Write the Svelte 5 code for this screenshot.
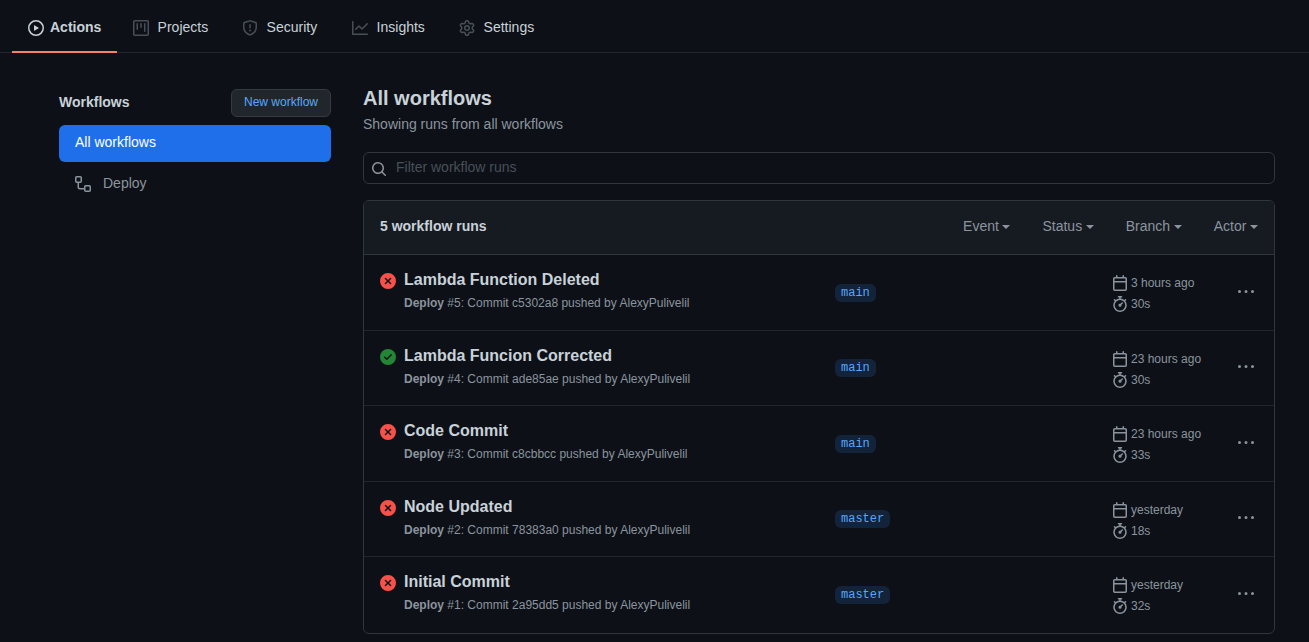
<script>
  const tabs = [
    { id: 'play', label: 'Actions', width: 105, active: true },
    { id: 'project', label: 'Projects', width: 109 },
    { id: 'shield', label: 'Security', width: 110 },
    { id: 'graph', label: 'Insights', width: 107 },
    { id: 'gear', label: 'Settings', width: 108 }
  ];
  const filters = ['Event', 'Status', 'Branch', 'Actor'];
  const runs = [
    { title: 'Lambda Function Deleted', n: 5, sha: 'c5302a8', branch: 'main', when: '3 hours ago', took: '30s' },
    { title: 'Lambda Funcion Corrected', n: 4, sha: 'ade85ae', branch: 'main', when: '23 hours ago', took: '30s', ok: true },
    { title: 'Code Commit', n: 3, sha: 'c8cbbcc', branch: 'main', when: '23 hours ago', took: '33s' },
    { title: 'Node Updated', n: 2, sha: '78383a0', branch: 'master', when: 'yesterday', took: '18s' },
    { title: 'Initial Commit', n: 1, sha: '2a95dd5', branch: 'master', when: 'yesterday', took: '32s' }
  ];
  const paths = {
    play: 'M1.5 8a6.5 6.5 0 1113 0 6.5 6.5 0 01-13 0zM8 0a8 8 0 100 16A8 8 0 008 0zM6.379 5.227A.25.25 0 006 5.442v5.117a.25.25 0 00.379.214l4.264-2.559a.25.25 0 000-.428L6.379 5.227z',
    project: 'M1.75 0A1.75 1.75 0 000 1.75v12.5C0 15.216.784 16 1.75 16h12.5A1.75 1.75 0 0016 14.25V1.75A1.75 1.75 0 0014.25 0H1.75zM1.5 1.75a.25.25 0 01.25-.25h12.5a.25.25 0 01.25.25v12.5a.25.25 0 01-.25.25H1.75a.25.25 0 01-.25-.25V1.75zM11.75 3a.75.75 0 00-.75.75v7.5a.75.75 0 001.5 0v-7.5a.75.75 0 00-.75-.75zm-8.25.75a.75.75 0 011.5 0v5.5a.75.75 0 01-1.5 0v-5.5zM8 3a.75.75 0 00-.75.75v3.5a.75.75 0 001.5 0v-3.5A.75.75 0 008 3z',
    shield: 'M7.467.133a1.75 1.75 0 011.066 0l5.25 1.68A1.75 1.75 0 0115 3.48V7c0 1.566-.32 3.182-1.303 4.682-.983 1.498-2.585 2.813-5.032 3.855a1.7 1.7 0 01-1.33 0c-2.447-1.042-4.049-2.357-5.032-3.855C1.32 10.182 1 8.566 1 7V3.48a1.75 1.75 0 011.217-1.667l5.25-1.68zm.61 1.429a.25.25 0 00-.153 0l-5.25 1.68a.25.25 0 00-.174.238V7c0 1.358.275 2.666 1.057 3.86.784 1.194 2.121 2.34 4.366 3.297a.2.2 0 00.154 0c2.245-.956 3.582-2.104 4.366-3.298C13.225 9.666 13.5 8.36 13.5 7V3.48a.25.25 0 00-.174-.237l-5.25-1.68zM9 10.5a1 1 0 11-2 0 1 1 0 012 0zm-.25-5.75a.75.75 0 10-1.5 0v3a.75.75 0 001.5 0v-3z',
    graph: 'M1.5 1.75a.75.75 0 00-1.5 0v12.5c0 .414.336.75.75.75h14.5a.75.75 0 000-1.5H1.5V1.75zm14.28 2.53a.75.75 0 00-1.06-1.06L10 7.94 7.53 5.47a.75.75 0 00-1.06 0L3.22 8.72a.75.75 0 001.06 1.06L7 7.06l2.47 2.47a.75.75 0 001.06 0l5.25-5.25z',
    gear: 'M7.429 1.525a6.593 6.593 0 011.142 0c.036.003.108.036.137.146l.289 1.105c.147.56.55.967.997 1.189.174.086.341.183.501.29.417.278.97.423 1.53.27l1.102-.303c.11-.03.175.016.195.046.219.31.41.641.573.989.014.031.022.11-.059.19l-.815.806c-.411.406-.562.957-.53 1.456a4.588 4.588 0 010 .582c-.032.499.119 1.05.53 1.456l.815.806c.08.08.073.159.059.19a6.494 6.494 0 01-.573.99c-.02.029-.086.074-.195.045l-1.103-.303c-.559-.153-1.112-.008-1.529.27-.16.107-.327.204-.5.29-.449.222-.851.628-.998 1.189l-.289 1.105c-.029.11-.101.143-.137.146a6.613 6.613 0 01-1.142 0c-.036-.003-.108-.037-.137-.146l-.289-1.105c-.147-.56-.55-.967-.997-1.189a4.502 4.502 0 01-.501-.29c-.417-.278-.97-.423-1.53-.27l-1.102.303c-.11.03-.175-.016-.195-.046a6.492 6.492 0 01-.573-.989c-.014-.031-.022-.11.059-.19l.815-.806c.411-.406.562-.957.53-1.456a4.587 4.587 0 010-.582c.032-.499-.119-1.05-.53-1.456l-.815-.806c-.08-.08-.073-.159-.059-.19a6.44 6.44 0 01.573-.99c.02-.029.086-.075.195-.045l1.103.303c.559.153 1.112.008 1.529-.27.16-.107.327-.204.5-.29.449-.222.851-.628.998-1.189l.289-1.105c.029-.11.101-.143.137-.146zM8 0c-.236 0-.47.01-.701.03-.743.065-1.29.615-1.458 1.261l-.29 1.106c-.017.066-.078.158-.211.224a5.994 5.994 0 00-.668.386c-.123.082-.233.09-.3.071L3.27 2.776c-.644-.177-1.392.02-1.82.63a7.977 7.977 0 00-.704 1.217c-.315.675-.111 1.422.363 1.891l.815.806c.05.048.098.147.088.294a6.084 6.084 0 000 .772c.01.147-.038.246-.088.294l-.815.806c-.474.469-.678 1.216-.363 1.891.2.428.436.835.704 1.218.428.609 1.176.806 1.82.63l1.103-.303c.066-.019.176-.011.299.071.213.143.436.272.668.386.133.066.194.158.212.224l.289 1.106c.169.646.715 1.196 1.458 1.26a8.094 8.094 0 001.402 0c.743-.064 1.29-.614 1.458-1.26l.29-1.106c.017-.066.078-.158.211-.224a5.98 5.98 0 00.668-.386c.123-.082.233-.09.3-.071l1.102.302c.644.177 1.392-.02 1.82-.63.268-.382.505-.789.704-1.217.315-.675.111-1.422-.364-1.891l-.814-.806c-.05-.048-.098-.147-.088-.294a6.1 6.1 0 000-.772c-.01-.147.039-.246.088-.294l.814-.806c.475-.469.679-1.216.364-1.891a7.992 7.992 0 00-.704-1.218c-.428-.609-1.176-.806-1.82-.63l-1.103.303c-.066.019-.176.011-.299-.071a5.991 5.991 0 00-.668-.386c-.133-.066-.194-.158-.212-.224L10.16 1.29C9.99.645 9.444.095 8.701.031A8.094 8.094 0 008 0zm1.5 8a1.5 1.5 0 11-3 0 1.5 1.5 0 013 0zM11 8a3 3 0 11-6 0 3 3 0 016 0z',
    workflow: 'M0 1.75C0 .784.784 0 1.75 0h3.5C6.216 0 7 .784 7 1.75v3.5A1.75 1.75 0 015.25 7H4v4a1 1 0 001 1h4v-1.25C9 9.784 9.784 9 10.75 9h3.5c.966 0 1.75.784 1.75 1.75v3.5A1.75 1.75 0 0114.25 16h-3.5A1.75 1.75 0 019 14.25v-.75H5A2.5 2.5 0 012.5 11V7h-.75A1.75 1.75 0 010 5.25v-3.5zm1.75-.25a.25.25 0 00-.25.25v3.5c0 .138.112.25.25.25h3.5a.25.25 0 00.25-.25v-3.5a.25.25 0 00-.25-.25h-3.5zm9 9a.25.25 0 00-.25.25v3.5c0 .138.112.25.25.25h3.5a.25.25 0 00.25-.25v-3.5a.25.25 0 00-.25-.25h-3.5z',
    search: 'M11.5 7a4.499 4.499 0 11-8.998 0A4.499 4.499 0 0111.5 7zm-.82 4.74a6 6 0 111.06-1.06l3.04 3.04a.75.75 0 11-1.06 1.06l-3.04-3.04z',
    fail: 'M2.343 13.657A8 8 0 1113.657 2.343 8 8 0 012.343 13.657zM6.03 4.97a.75.75 0 00-1.06 1.06L6.94 8 4.97 9.97a.75.75 0 101.06 1.06L8 9.06l1.97 1.97a.75.75 0 101.06-1.06L9.06 8l1.97-1.97a.75.75 0 10-1.06-1.06L8 6.94 6.03 4.97z',
    check: 'M8 16A8 8 0 108 0a8 8 0 000 16zm3.78-9.72a.75.75 0 00-1.06-1.06L6.75 9.19 5.28 7.72a.75.75 0 00-1.06 1.06l2 2a.75.75 0 001.06 0l4.5-4.5z',
    calendar: 'M4.75 0a.75.75 0 01.75.75V2h5V.75a.75.75 0 011.5 0V2h1.25c.966 0 1.75.784 1.75 1.75v10.5A1.75 1.75 0 0113.25 16H2.75A1.75 1.75 0 011 14.25V3.75C1 2.784 1.784 2 2.75 2H4V.75A.75.75 0 014.75 0zm0 3.5h-2a.25.25 0 00-.25.25V6h11V3.75a.25.25 0 00-.25-.25h-8.5zm-2.25 4v6.75c0 .138.112.25.25.25h10.5a.25.25 0 00.25-.25V7.5h-11z',
    stopwatch: 'M5.75.75A.75.75 0 016.5 0h3a.75.75 0 010 1.5h-.75v1l-.001.041a6.718 6.718 0 013.464 1.435l.007-.006.75-.75a.75.75 0 111.06 1.06l-.75.75-.006.007a6.75 6.75 0 11-10.548 0L2.72 5.03l-.75-.75a.75.75 0 011.06-1.06l.75.75.007.006A6.718 6.718 0 017.25 2.541a.756.756 0 010-.041v-1H6.5a.75.75 0 01-.75-.75zM8 14.5A5.25 5.25 0 108 4a5.25 5.25 0 000 10.5zm.389-6.7l1.33-1.33a.75.75 0 111.061 1.06L9.45 8.861A1.502 1.502 0 018 10.75a1.5 1.5 0 11.389-2.95z',
    kebab: 'M8 9a1.5 1.5 0 100-3 1.5 1.5 0 000 3zM1.5 9a1.5 1.5 0 100-3 1.5 1.5 0 000 3zm13 0a1.5 1.5 0 100-3 1.5 1.5 0 000 3z'
  };
</script>

{#snippet icon(name)}
  <svg class="icon {name}" viewBox="0 0 16 16" width="16" height="16" aria-hidden="true">
    <path fill-rule="evenodd" d={paths[name]} />
  </svg>
{/snippet}

<nav class="tabs">
  {#each tabs as tab}
    <a class="tab" class:active={tab.active} style="width: {tab.width}px">
      {@render icon(tab.id)}
      <span>{tab.label}</span>
    </a>
  {/each}
</nav>

<div class="layout">
  <aside>
    <div class="side-head">
      <h2>Workflows</h2>
      <button class="new">New workflow</button>
    </div>
    <a class="side-item selected">All workflows</a>
    <a class="side-item sub">{@render icon('workflow')}<span>Deploy</span></a>
  </aside>

  <main>
    <h1>All workflows</h1>
    <p class="lead">Showing runs from all workflows</p>
    <div class="search-box">
      {@render icon('search')}
      <span>Filter workflow runs</span>
    </div>

    <section class="box">
      <header>
        <strong>5 workflow runs</strong>
        <div class="filters">
          {#each filters as f}
            <span class="filter">{f}<i class="caret"></i></span>
          {/each}
        </div>
      </header>
      {#each runs as run}
        <div class="row">
          <div class="status" class:ok={run.ok}>{@render icon(run.ok ? 'check' : 'fail')}</div>
          <div class="info">
            <div class="title">{run.title}</div>
            <div class="desc"><b>Deploy</b> #{run.n}: Commit {run.sha} pushed by AlexyPulivelil</div>
          </div>
          <div class="branch"><span>{run.branch}</span></div>
          <div class="meta">
            <div>{@render icon('calendar')}<span>{run.when}</span></div>
            <div>{@render icon('stopwatch')}<span>{run.took}</span></div>
          </div>
          <div class="more">{@render icon('kebab')}</div>
        </div>
      {/each}
    </section>
  </main>
</div>

<style>
  :global(body) {
    background: #0d1117;
    color: #c9d1d9;
    font-family: 'Liberation Sans', Arial, sans-serif;
    font-size: 14px;
    line-height: 21px;
    overflow: hidden;
  }
  :global(*) { box-sizing: border-box; }
  .icon { display: block; flex: none; fill: currentColor; }

  .tabs {
    display: flex;
    height: 53px;
    padding-left: 12px;
    border-bottom: 1px solid #21262d;
  }
  .tab {
    display: flex;
    flex: none;
    align-items: flex-start;
    gap: 8.6px;
    height: 53px;
    padding: 17px 0 0 16px;
    border-bottom: 2px solid transparent;
  }
  .tab .icon { margin-top: 3px; color: #484f58; }
  .tab.active { gap: 6px; border-color: #f78166; font-weight: 700; }
  .tab.active .icon { color: #c9d1d9; }

  .layout {
    display: grid;
    grid-template-columns: 272px 912px;
    column-gap: 32px;
    padding: 36px 0 0 59px;
  }
  .side-head {
    display: flex;
    justify-content: space-between;
    height: 28px;
    margin-bottom: 8px;
  }
  h2 { margin: 3px 0 0; font-size: 14px; line-height: 21px; }
  .new {
    width: 100px;
    height: 28px;
    padding: 0 0 2px;
    border: 1px solid #363b42;
    border-radius: 6px;
    background: #21262d;
    color: #58a6ff;
    font: 12px/20px 'Liberation Sans', Arial, sans-serif;
  }
  .side-item { display: flex; height: 37px; padding: 7px 16px; border-radius: 6px; }
  .selected { background: #1f6feb; color: #fff; }
  .sub { margin-top: 4px; gap: 12px; color: #8b949e; }
  .sub .icon { margin-top: 3px; }

  h1 { margin: -6px 0 0; font-size: 20px; line-height: 30px; }
  .lead { margin: 1px 0 17px; color: #8b949e; }
  .search-box {
    display: flex;
    gap: 9px;
    height: 32px;
    padding: 4px 7px;
    border: 1px solid #30363d;
    border-radius: 6px;
    color: #484f58;
  }
  .search-box .icon { margin-top: 4px; color: #8b949e; }

  .box {
    height: 434px;
    margin-top: 16px;
    overflow: hidden;
    border: 1px solid #30363d;
    border-radius: 6px;
  }
  header {
    display: flex;
    align-items: flex-start;
    justify-content: space-between;
    height: 53.4px;
    padding: 15px 16px 0;
    background: #161b22;
  }
  .filters { display: flex; gap: 32px; color: #8b949e; }
  .filter { display: flex; align-items: center; gap: 3.6px; }
  .caret {
    border: 4px solid transparent;
    border-top-color: currentColor;
    border-bottom: 0;
    margin-top: 1px;
  }
  .row {
    display: grid;
    grid-template-columns: 24px 431px 277px 126px 16px;
    height: 75.5px;
    padding: 0 16px;
    border-top: 1px solid #21262d;
  }
  header + .row { border-top-color: #30363d; }
  .status { padding-top: 18px; color: #f85149; }
  .status.ok { color: #238636; }
  .title { margin-top: 13px; font-size: 16px; font-weight: 700; line-height: 24px; }
  .desc { margin-top: 2px; color: #8b949e; font-size: 12px; line-height: 18px; }
  .branch { padding-top: 28.5px; }
  .branch span {
    display: block;
    width: max-content;
    height: 18px;
    padding: 0 6px;
    border-radius: 6px;
    background: rgba(56, 139, 253, 0.15);
    color: #58a6ff;
    font: 12px/18px 'Liberation Mono', monospace;
  }
  .meta { padding-top: 19px; color: #8b949e; font-size: 12px; line-height: 18px; }
  .meta div { display: flex; gap: 3px; height: 21px; }
  .meta .icon { margin-top: 1px; }
  .more { padding-top: 28.5px; color: #8b949e; }
</style>
